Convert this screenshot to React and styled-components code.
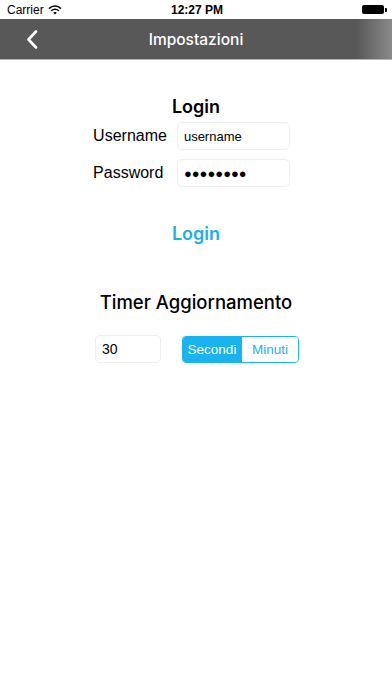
import React, { useState } from 'react';
import styled, { createGlobalStyle } from 'styled-components';

const GlobalStyle = createGlobalStyle`
  html, body {
    margin: 0;
    padding: 0;
    background: #ffffff;
  }
  body {
    font-family: "Liberation Sans", Arial, sans-serif;
    color: #000;
  }
  * { box-sizing: border-box; }
`;

const Screen = styled.div`
  width: 392px;
  height: 696px;
  background: #fff;
  display: flex;
  flex-direction: column;
`;

const StatusBar = styled.div`
  height: 19px;
  display: grid;
  grid-template-columns: 1fr auto 1fr;
  align-items: center;
  padding: 0 5px 0 7px;
  font-size: 12px;
  background: #fff;
`;

const Carrier = styled.div`
  display: flex;
  align-items: center;
  gap: 4px;
`;

const Clock = styled.div`
  font-weight: 700;
  font-size: 12px;
`;

const Battery = styled.div`
  justify-self: end;
  display: flex;
  align-items: center;
`;

const BatteryBody = styled.div`
  width: 22px;
  height: 9px;
  background: #000;
  border-radius: 2px;
`;

const BatteryTip = styled.div`
  width: 2px;
  height: 4px;
  background: #000;
  margin-left: 1px;
  border-radius: 0 1px 1px 0;
`;

const NavBar = styled.div`
  height: 41px;
  display: flex;
  align-items: center;
  justify-content: center;
  background: linear-gradient(to right, #585858 0%, #585858 91%, #8a8a8a 100%);
  border-bottom: 1px solid #b5b5b5;
  color: #fff;
  font-family: Inter, "Liberation Sans", sans-serif;
  font-weight: 500;
  font-size: 15.5px;
  position: relative;
`;

const BackButton = styled.div`
  position: absolute;
  left: 26px;
  top: 11px;
  display: flex;
`;

const Content = styled.div`
  display: flex;
  flex-direction: column;
  align-items: center;
  padding-top: 36px;
`;

const SectionTitle = styled.div`
  font-family: Inter, "Liberation Sans", sans-serif;
  font-size: 18px;
  font-weight: 600;
  text-align: center;
`;

const FormGrid = styled.div`
  display: grid;
  grid-template-columns: auto 113px;
  column-gap: 10px;
  row-gap: 9px;
  align-items: center;
  margin-top: 5px;
  margin-right: 9px;
`;

const Label = styled.div`
  font-size: 16px;
`;

const Field = styled.div`
  height: 28px;
  border: 1px solid #efefef;
  border-radius: 5px;
  display: flex;
  align-items: center;
  padding-left: 6px;
  font-size: ${(p) => p.$size || 13}px;
  width: ${(p) => p.$width || 'auto'};
`;

const LinkButton = styled.div`
  font-family: Inter, "Liberation Sans", sans-serif;
  color: #1ab0ea;
  font-size: 18px;
  font-weight: 600;
  margin-top: 36px;
`;

const TimerTitle = styled.div`
  font-family: Inter, "Liberation Sans", sans-serif;
  font-size: 18.5px;
  font-weight: 500;
  margin-top: 47px;
`;

const TimerRow = styled.div`
  display: flex;
  align-items: center;
  gap: 21px;
  margin-top: 22px;
  margin-left: 2px;
`;

const Segmented = styled.div`
  display: flex;
  border: 1px solid #19b3f0;
  border-radius: 4px;
  overflow: hidden;
  height: 27px;
`;

const Segment = styled.div`
  width: ${(p) => p.$w}px;
  display: flex;
  align-items: center;
  justify-content: center;
  font-size: 13.5px;
  background: ${(p) => (p.$active ? '#19b3f0' : '#fff')};
  color: ${(p) => (p.$active ? '#fff' : '#19b3f0')};
  cursor: pointer;
  & + & {
    border-left: 1px solid #19b3f0;
  }
`;

function Wifi() {
  return (
    <svg width="14" height="10" viewBox="0 0 14 10">
      <path d="M1 3.6 A8.5 8.5 0 0 1 13 3.6" stroke="#000" strokeWidth="1.5" fill="none" />
      <path d="M3.2 5.8 A5.4 5.4 0 0 1 10.8 5.8" stroke="#000" strokeWidth="1.5" fill="none" />
      <path d="M7 9.6 L5.2 7.8 A2.6 2.6 0 0 1 8.8 7.8 Z" fill="#000" />
    </svg>
  );
}

export default function App() {
  const [unit, setUnit] = useState('sec');
  return (
    <>
      <GlobalStyle />
      <Screen>
        <StatusBar>
          <Carrier>
            Carrier <Wifi />
          </Carrier>
          <Clock>12:27 PM</Clock>
          <Battery>
            <BatteryBody />
            <BatteryTip />
          </Battery>
        </StatusBar>
        <NavBar>
          <BackButton>
            <svg width="12" height="19" viewBox="0 0 12 19">
              <path d="M10 1.5 L2.5 9.5 L10 17.5" stroke="#fff" strokeWidth="2.6" fill="none" strokeLinecap="round" strokeLinejoin="round" />
            </svg>
          </BackButton>
          Impostazioni
        </NavBar>
        <Content>
          <SectionTitle>Login</SectionTitle>
          <FormGrid>
            <Label>Username</Label>
            <Field>username</Field>
            <Label>Password</Label>
            <Field>●●●●●●●●</Field>
          </FormGrid>
          <LinkButton>Login</LinkButton>
          <TimerTitle>Timer Aggiornamento</TimerTitle>
          <TimerRow>
            <Field $width="66px" $size={14}>30</Field>
            <Segmented>
              <Segment $w={58} $active={unit === 'sec'} onClick={() => setUnit('sec')}>
                Secondi
              </Segment>
              <Segment $w={57} $active={unit === 'min'} onClick={() => setUnit('min')}>
                Minuti
              </Segment>
            </Segmented>
          </TimerRow>
        </Content>
      </Screen>
    </>
  );
}
